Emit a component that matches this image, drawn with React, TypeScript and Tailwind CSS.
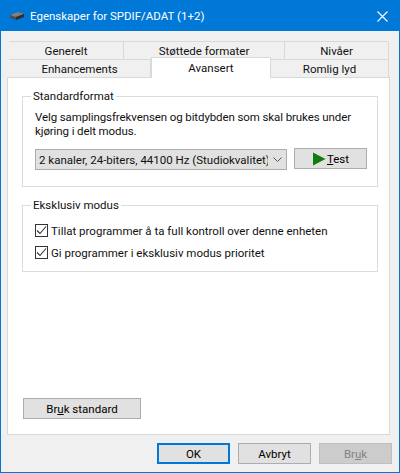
import type { ReactNode } from 'react';

type ButtonProps = {
  children: ReactNode;
  className?: string;
  tone?: 'normal' | 'primary' | 'disabled';
};

const tones = {
  normal: 'border border-[#adadad] bg-[#e1e1e1] text-black',
  primary: 'border-2 border-[#0078d7] bg-[#e1e1e1] text-black',
  disabled: 'border border-[#bfbfbf] bg-[#cccccc] text-[#838383]',
};

function Button({ children, className = '', tone = 'normal' }: ButtonProps) {
  return (
    <div className={`flex items-center justify-center ${tones[tone]} ${className}`}>
      {children}
    </div>
  );
}

function Tab({ label, className = '' }: { label: string; className?: string }) {
  return (
    <div
      className={`flex items-center justify-center border border-b-0 border-l-0 border-[#d9d9d9] bg-[#f0f0f0] pt-px ${className}`}
    >
      {label}
    </div>
  );
}

function Check({ label }: { label: string }) {
  return (
    <div className="flex items-center gap-[3px] h-[13px]">
      <div className="w-[13px] h-[13px] border border-[#333333] bg-white flex items-center justify-center shrink-0">
        <svg width="11" height="11" viewBox="0 0 11 11" fill="none">
          <path d="M1 5.5 L4 8.5 L10 1.5" stroke="#333333" strokeWidth="1.1" />
        </svg>
      </div>
      <span className="whitespace-nowrap">{label}</span>
    </div>
  );
}

export default function App() {
  return (
    <div className="w-[400px] h-[473px] border border-[#0078d7] bg-[#f0f0f0] flex flex-col text-[11.5px] leading-[16px] text-[#111111] font-['Roboto',sans-serif] overflow-hidden">
      <div className="h-[30px] bg-[#0078d7] flex items-center text-white shrink-0">
        <svg className="ml-[8px]" width="16" height="16" viewBox="0 0 16 16">
          <path d="M1 7 L9 4 L15 6 L15 9 L7 12 L1 10 Z" fill="#4a4f55" />
          <path d="M1 7 L7 9 L15 6 L9 4 Z" fill="#7c8288" />
          <path d="M7 9 L7 12 L15 9 L15 6 Z" fill="#2c3035" />
        </svg>
        <span className="ml-[5px]">Egenskaper for SPDIF/ADAT (1+2)</span>
        <svg className="ml-auto mr-[11px]" width="11" height="11" viewBox="0 0 11 11">
          <path d="M0.5 0.5 L10.5 10.5 M10.5 0.5 L0.5 10.5" stroke="white" strokeWidth="1.1" />
        </svg>
      </div>

      <div className="flex-1 flex flex-col pl-[6px] pr-[9px] pt-[10px]">
        <div className="flex h-[18px] pl-[2px] pr-[1px]">
          <Tab label="Generelt" className="w-[115px] border-l" />
          <Tab label="Støttede formater" className="w-[161px]" />
          <Tab label="Nivåer" className="w-[104px]" />
        </div>
        <div className="flex h-[18px] pl-[2px] pr-[1px] relative z-10">
          <Tab label="Enhancements" className="w-[142px] border-l" />
          <div className="w-[120px] h-[21px] -mt-[2px] bg-white border border-b-0 border-[#d9d9d9] flex justify-center pt-[2px]">
            Avansert
          </div>
          <Tab label="Romlig lyd" className="w-[118px]" />
        </div>

        <div className="h-[358px] bg-white border border-[#d9d9d9] flex flex-col pl-[14px] pr-[11px] pt-[11px]">
          <fieldset className="h-[98px] border border-[#dcdcdc] pl-[12px] pr-[10px]">
            <legend className="ml-[-4px] px-[2px] leading-[14px]">Standardformat</legend>
            <p className="mt-[7px] leading-[14px] tracking-[-0.1px]">
              Velg samplingsfrekvensen og bitdybden som skal brukes under kjøring i delt modus.
            </p>
            <div className="flex mt-[10px] gap-[7px] items-start">
              <div className="w-[252px] h-[21px] mt-px border border-[#adadad] bg-[#e1e1e1] flex items-center pl-[3px] overflow-hidden relative">
                <span className="whitespace-nowrap">2 kanaler, 24-biters, 44100 Hz (Studiokvalitet)</span>
                <div className="absolute right-0 top-0 w-[18px] h-[19px] bg-[#e1e1e1] flex items-center justify-center">
                  <svg width="9" height="6" viewBox="0 0 9 6" fill="none">
                    <path d="M0.5 0.5 L4.5 4.5 L8.5 0.5" stroke="#555555" strokeWidth="1" />
                  </svg>
                </div>
              </div>
              <Button className="w-[73px] h-[21px]">
                <svg width="14" height="14" viewBox="0 0 14 14" className="mr-px">
                  <path d="M1 0.5 L13.5 7 L1 13.5 Z" fill="#107c10" />
                </svg>
                <span>
                  <span className="underline">T</span>est
                </span>
              </Button>
            </div>
          </fieldset>

          <fieldset className="h-[74px] mt-[11px] border border-[#dcdcdc] pl-[12px]">
            <legend className="ml-[-4px] px-[2px] leading-[14px]">Eksklusiv modus</legend>
            <div className="mt-[12px] flex flex-col gap-[9px]">
              <Check label="Tillat programmer å ta full kontroll over denne enheten" />
              <Check label="Gi programmer i eksklusiv modus prioritet" />
            </div>
          </fieldset>

          <Button className="w-[118px] h-[21px] mt-auto mb-[15px] ml-px">
            <span>
              Br<span className="underline">u</span>k standard
            </span>
          </Button>
        </div>

        <div className="flex justify-end gap-[8px] mt-[8px] -mr-[2px]">
          <Button tone="primary" className="w-[73px] h-[21px]">OK</Button>
          <Button className="w-[73px] h-[21px]">Avbryt</Button>
          <Button tone="disabled" className="w-[73px] h-[21px]">
            <span>
              Br<span className="underline">u</span>k
            </span>
          </Button>
        </div>
      </div>
    </div>
  );
}
